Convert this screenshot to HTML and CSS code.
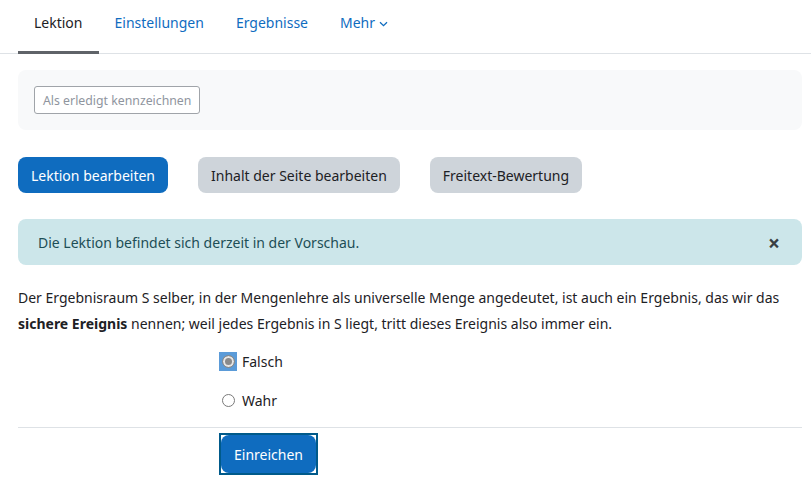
FILE: index.html
```html
<!DOCTYPE html>
<html lang="de">
<head>
<meta charset="utf-8">
<link rel="stylesheet" href="styles.css">
</head>
<body>
<div class="page">
  <nav class="tabs">
    <a class="tab active">Lektion</a>
    <a class="tab">Einstellungen</a>
    <a class="tab">Ergebnisse</a>
    <a class="tab">Mehr <svg class="chev" width="9" height="6" viewBox="0 0 9 6"><path d="M1 1.2 L4.5 4.6 L8 1.2" fill="none" stroke="currentColor" stroke-width="1.3"/></svg></a>
  </nav>
  <div class="completion">
    <button class="btn-outline">Als erledigt kennzeichnen</button>
  </div>
  <div class="actions">
    <button class="btn btn-primary">Lektion bearbeiten</button>
    <button class="btn btn-secondary">Inhalt der Seite bearbeiten</button>
    <button class="btn btn-secondary">Freitext-Bewertung</button>
  </div>
  <div class="alert">
    <span>Die Lektion befindet sich derzeit in der Vorschau.</span>
    <span class="close">×</span>
  </div>
  <p class="question">Der Ergebnisraum S selber, in der Mengenlehre als universelle Menge angedeutet, ist auch ein Ergebnis, das wir das <strong>sichere Ereignis</strong> nennen; weil jedes Ergebnis in S liegt, tritt dieses Ereignis also immer ein.</p>
  <div class="answers">
    <label class="option"><span class="radio-focus"><span class="radio checked"></span></span>Falsch</label>
    <label class="option"><span class="radio-plain"><span class="radio"></span></span>Wahr</label>
  </div>
  <div class="submit-row">
    <span class="submit-focus"><button class="btn btn-primary submit">Einreichen</button></span>
  </div>
</div>
</body>
</html>
```
FILE: styles.css
```css
* { box-sizing: border-box; }
body {
  margin: 0;
  font-family: "Noto Sans", "Open Sans", sans-serif;
  color: #1d2125;
  background: #fff;
}
.page { padding: 0 9px 0 18px; }
.tabs {
  display: flex;
  border-bottom: 1px solid #dee2e6;
  margin-right: -9px;
  margin-left: -18px;
  padding-left: 18px;
  height: 54px;
}
.tab {
  display: flex;
  align-items: center;
  padding: 0 16px 6px;
  font-size: 14px;
  color: #0f6cbf;
  border-bottom: 3px solid transparent;
  margin-bottom: -1px;
  gap: 4px;
}
.tab.active { color: #1d2125; border-bottom-color: #5f6368; }
.chev { margin-top: 2px; }
.completion {
  margin-top: 16px;
  background: #f8f9fa;
  border-radius: 8px;
  height: 60px;
  padding: 16px;
}
.btn-outline {
  font-family: inherit;
  height: 28px;
  font-size: 12.3px;
  color: #8f959e;
  background: #fff;
  border: 1px solid #a0a4a9;
  border-radius: 3px;
  padding: 0 8px;
}
.actions {
  display: flex;
  gap: 30px;
  margin-top: 27px;
}
.btn {
  font-family: inherit;
  height: 36px;
  font-size: 14px;
  border: none;
  border-radius: 8px;
  padding: 0 13px;
}
.btn-primary { background: #0f6cbf; color: #fff; }
.btn-secondary { background: #ced4da; color: #1d2125; }
.alert {
  margin-top: 26px;
  background: #cce6ea;
  color: #1d4e56;
  border-radius: 8px;
  height: 46px;
  display: flex;
  align-items: center;
  justify-content: space-between;
  padding: 0 22px 0 20px;
  font-size: 14px;
}
.close { font-size: 21px; color: #3a3f44; font-weight: bold; line-height: 1; margin-top: 3px; }
.question {
  margin: 20px 0 0;
  font-size: 14px;
  line-height: 26px;
}
.answers {
  padding-left: 201px;
  margin-top: 15px;
  display: flex;
  flex-direction: column;
  gap: 20px;
  padding-bottom: 17px;
  border-bottom: 1px solid #dee2e6;
}
.option {
  display: flex;
  align-items: center;
  font-size: 14px;
  height: 19px;
  gap: 5px;
}
.radio-focus {
  width: 18px; height: 19px;
  background: #5b9bd8;
  display: flex; align-items: center; justify-content: center;
}
.radio-plain {
  width: 18px; height: 19px;
  display: flex; align-items: center; justify-content: center;
}
.radio {
  width: 13px; height: 13px;
  border-radius: 50%;
  border: 1px solid #7a7a7a;
  background: #fff;
}
.radio.checked {
  background: #8a8a8a;
  box-shadow: inset 0 0 0 2px #e6e6e6;
  border-color: #8a8a8a;
}
.submit-row { padding-left: 201px; margin-top: 5px; }
.submit-focus {
  display: inline-block;
  border: 2px solid #005a8a;
}
.submit { height: 38px; padding: 0 13px; display: block; }
```
